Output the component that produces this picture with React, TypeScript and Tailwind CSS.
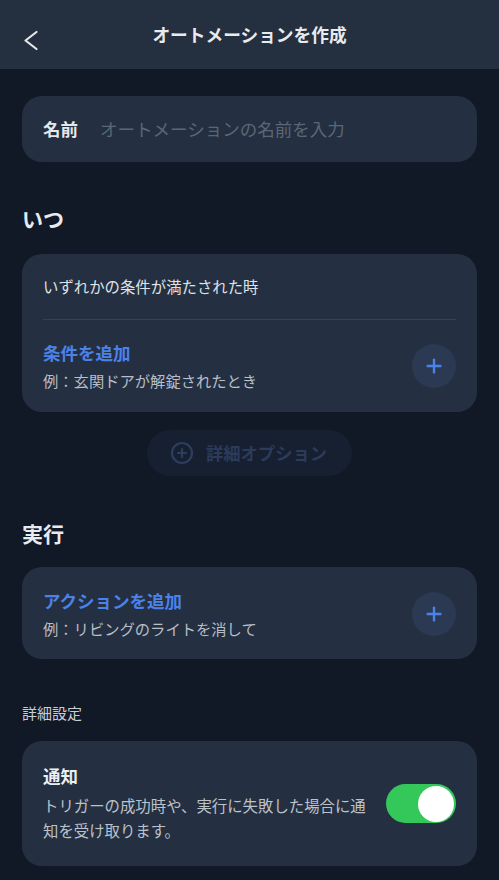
import { Plus, CirclePlus } from "lucide-react";

const font = { fontFamily: '"Noto Sans CJK JP", "Noto Sans", sans-serif' };

const AddCard = ({ title, example }: { title: string; example: string }) => (
  <div className="flex items-center justify-between">
    <div>
      <div className="text-[17.5px] leading-[24px] font-bold text-[#4b82ea]">{title}</div>
      <div className="mt-[4px] text-[15.3px] leading-[22px] text-[#b8bec8]">{example}</div>
    </div>
    <button className="w-[44px] h-[44px] rounded-full bg-[#2b3a52] flex items-center justify-center">
      <Plus className="w-[22px] h-[22px] text-[#4b82ea]" strokeWidth={2.6} />
    </button>
  </div>
);

export default function App() {
  return (
    <div style={font} className="w-[499px] h-[880px] overflow-hidden bg-[#111826] text-[#e5e7eb]">
      <header className="h-[69px] bg-[#242f3f] flex items-center justify-center relative">
        <svg
          className="absolute left-[22px] top-[29px]"
          width="18"
          height="23"
          viewBox="0 0 18 23"
          fill="none"
          stroke="#e5e7eb"
          strokeWidth="2.2"
          strokeLinecap="round"
          strokeLinejoin="round"
        >
          <polyline points="14.5,3 3.5,11.5 14.5,20" />
        </svg>
        <h1 className="text-[17.7px] font-bold text-[#e8eaee]">オートメーションを作成</h1>
      </header>

      <main className="px-[22px] pt-[27px]">
        <div className="h-[66px] rounded-[20px] bg-[#243041] px-[21px] flex items-center">
          <span className="text-[17.5px] font-bold text-[#e5e7eb] mr-[22px]">名前</span>
          <span className="text-[17.5px] text-[#5d6676]">オートメーションの名前を入力</span>
        </div>

        <h2 className="mt-[40px] mb-[20px] text-[21px] leading-[32px] font-bold text-[#e8eaee]">いつ</h2>

        <div className="rounded-[20px] bg-[#243041] px-[21px] pt-[21px] pb-[21px]">
          <div className="text-[15.4px] leading-[22px] text-[#dfe2e7]">いずれかの条件が満たされた時</div>
          <div className="mt-[22px] mb-[21px] h-px bg-[#364254]" />
          <AddCard title="条件を追加" example="例：玄関ドアが解錠されたとき" />
        </div>

        <div className="mt-[18px] flex justify-center">
          <button className="h-[46px] w-[205px] rounded-full bg-[#162031] flex items-center pl-[23px] gap-[12px]">
            <CirclePlus className="w-[24px] h-[24px] text-[#2c3d5e]" strokeWidth={2.2} />
            <span className="text-[17.3px] font-bold text-[#2c3b5b]">詳細オプション</span>
          </button>
        </div>

        <h2 className="mt-[41px] mb-[18px] text-[21px] leading-[32px] font-bold text-[#e8eaee]">実行</h2>

        <div className="rounded-[20px] bg-[#243041] px-[21px] pt-[22px] pb-[20px]">
          <AddCard title="アクションを追加" example="例：リビングのライトを消して" />
        </div>

        <div className="mt-[44px] mb-[18px] text-[15px] leading-[20px] text-[#c9ced6]">詳細設定</div>

        <div className="rounded-[20px] bg-[#243041] px-[21px] pt-[23px] pb-[23px] flex items-center">
          <div className="w-[330px]">
            <div className="text-[17.5px] leading-[24px] font-bold text-[#eceef1]">通知</div>
            <div className="mt-[5px] text-[15.4px] leading-[25px] text-[#bcc2cb]">
              トリガーの成功時や、実行に失敗した場合に通知を受け取ります。
            </div>
          </div>
          <div className="ml-auto w-[70px] h-[39px] rounded-full bg-[#34c759] flex items-center justify-end pr-[2px]">
            <div className="w-[36px] h-[36px] rounded-full bg-white" />
          </div>
        </div>
      </main>
    </div>
  );
}
